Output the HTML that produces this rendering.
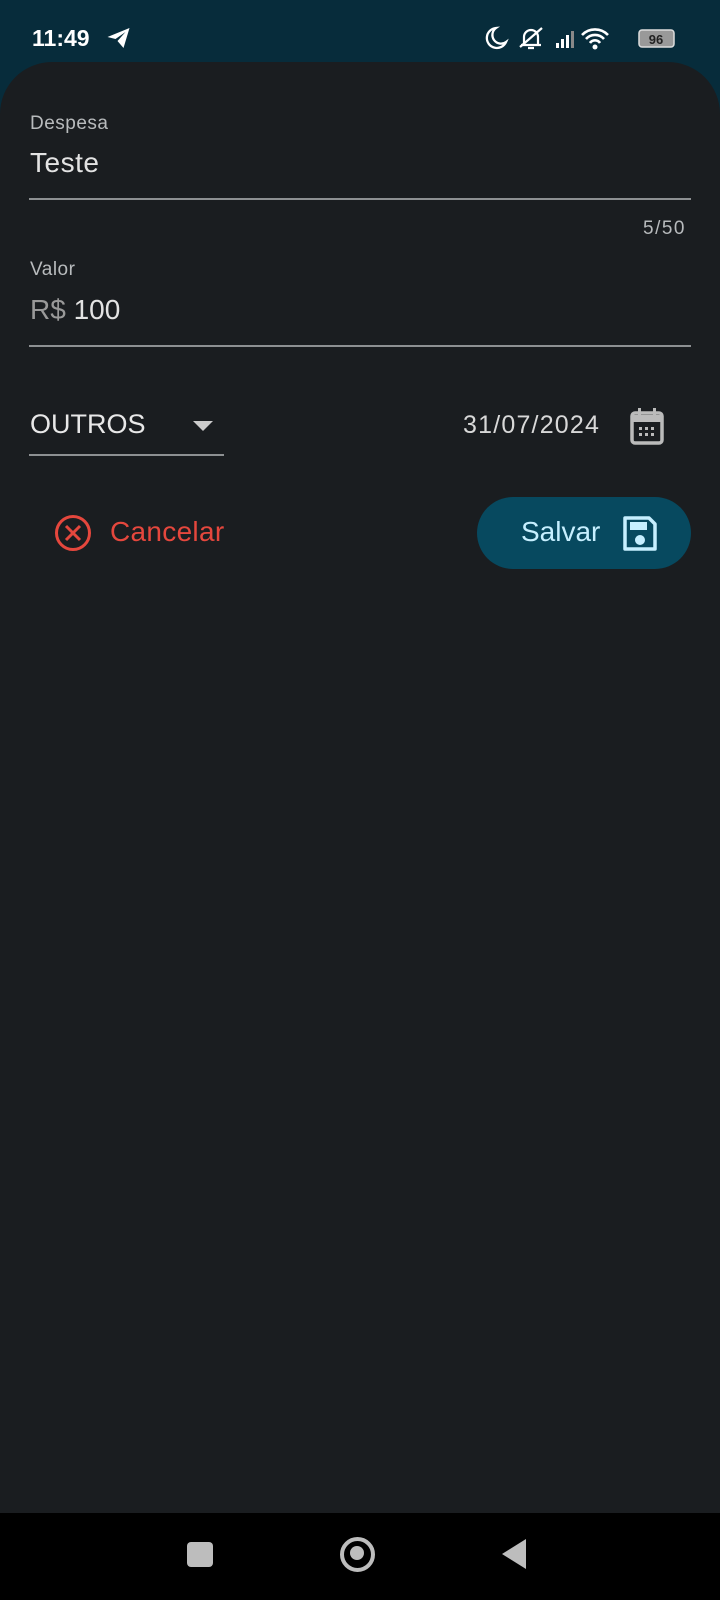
<!DOCTYPE html>
<html><head><meta charset="utf-8"><style>
body{margin:0;width:720px;height:1600px;background:#072c3b;font-family:"Liberation Sans",sans-serif;position:relative;overflow:hidden}
.card{position:absolute;left:0;top:62px;width:720px;height:1460px;background:#1a1d20;border-radius:52px 52px 0 0}
.t{position:absolute;white-space:nowrap}
.line{position:absolute;height:2px;background:#8d9092}
.nav{position:absolute;left:0;top:1513px;width:720px;height:87px;background:#000}
</style></head><body>
<div class="t" style="left:32px;top:25px;font-size:23px;font-weight:bold;color:#fff">11:49</div>
<svg class="t" style="left:106px;top:27px" width="25" height="22" viewBox="0 0 24 22"><path d="M1 10L23 1L17 21L11 14L19 5L9 12Z" fill="#fff"/></svg>
<svg class="t" style="left:482px;top:25px" width="196" height="28" viewBox="0 0 196 28">
<path d="M14 3a10 10 0 1 0 10 14a8 8 0 0 1-10-14z" fill="none" stroke="#fff" stroke-width="2.3"/>
<path d="M42 20V12a7 7 0 0 1 14 0v8h3H39z M46 23h6" fill="none" stroke="#fff" stroke-width="2.2"/><path d="M38 22L60 3" stroke="#fff" stroke-width="2.2"/>
<rect x="74" y="18" width="3" height="5" fill="#fff"/><rect x="79" y="14" width="3" height="9" fill="#fff"/><rect x="84" y="10" width="3" height="13" fill="#fff"/><rect x="89" y="6" width="3" height="17" fill="#888"/>
<path d="M100 10a18 18 0 0 1 26 0M104 14a12 12 0 0 1 18 0M108 18a6 6 0 0 1 10 0" fill="none" stroke="#fff" stroke-width="2.6"/><circle cx="113" cy="22" r="2.5" fill="#fff"/>
<rect x="157" y="5" width="35" height="17" rx="3" fill="#999" stroke="#ddd" stroke-width="1.5"/><text x="174" y="19" font-size="13" font-weight="bold" fill="#222" text-anchor="middle" font-family="Liberation Sans">96</text>
</svg>
<div class="card"></div>
<div class="t" style="left:30px;top:113px;font-size:19px;color:#b8bbbd;letter-spacing:0.5px">Despesa</div>
<div class="t" style="left:30px;top:147px;font-size:28px;color:#e3e3e3;letter-spacing:0.5px">Teste</div>
<div class="line" style="left:29px;top:198px;width:662px"></div>
<div class="t" style="left:643px;top:218px;font-size:19px;color:#b8bbbd;letter-spacing:1.5px">5/50</div>
<div class="t" style="left:30px;top:259px;font-size:19px;color:#b8bbbd;letter-spacing:0.5px">Valor</div>
<div class="t" style="left:30px;top:294px;font-size:28px;color:#e3e3e3"><span style="color:#999">R$</span> 100</div>
<div class="line" style="left:29px;top:345px;width:662px"></div>
<div class="t" style="left:30px;top:409px;font-size:27px;color:#e8e8e8">OUTROS</div>
<svg class="t" style="left:193px;top:421px" width="20" height="11"><path d="M0 0h20L10 10z" fill="#ccc"/></svg>
<div class="line" style="left:29px;top:454px;width:195px"></div>
<div class="t" style="left:463px;top:411px;font-size:25px;color:#d8d8d8;letter-spacing:1.2px">31/07/2024</div>
<svg class="t" style="left:629px;top:407px" width="36" height="38" viewBox="0 0 36 38"><rect x="3" y="6" width="30" height="30" rx="3" fill="none" stroke="#bbb" stroke-width="3.5"/><rect x="3" y="8" width="30" height="7" fill="#bbb"/><rect x="9" y="1" width="3" height="7" fill="#bbb"/><rect x="24" y="1" width="3" height="7" fill="#bbb"/><g fill="#bbb"><rect x="10" y="20" width="3" height="3"/><rect x="16" y="20" width="3" height="3"/><rect x="22" y="20" width="3" height="3"/><rect x="10" y="26" width="3" height="3"/><rect x="16" y="26" width="3" height="3"/><rect x="22" y="26" width="3" height="3"/></g></svg>
<svg class="t" style="left:54px;top:514px" width="38" height="38" viewBox="0 0 38 38"><circle cx="19" cy="19" r="16.5" fill="none" stroke="#e5473d" stroke-width="3"/><path d="M12 12l14 14M26 12L12 26" stroke="#e5473d" stroke-width="3"/></svg>
<div class="t" style="left:110px;top:516px;font-size:28px;color:#e5473d;letter-spacing:0.3px">Cancelar</div>
<div class="t" style="left:477px;top:497px;width:214px;height:72px;border-radius:36px;background:#07495f"></div>
<div class="t" style="left:521px;top:516px;font-size:28px;color:#c6efff">Salvar</div>
<svg class="t" style="left:622px;top:515px" width="36" height="37" viewBox="0 0 36 37"><path d="M3 3h24l6 6v25H3z" fill="none" stroke="#c6efff" stroke-width="3.5" stroke-linejoin="round"/><rect x="8" y="7" width="17" height="8" fill="#c6efff"/><circle cx="18" cy="25" r="5" fill="#c6efff"/></svg>
<div class="nav"></div>
<div class="t" style="left:187px;top:1542px;width:26px;height:25px;border-radius:4px;background:#bdbdbd"></div>
<div class="t" style="left:340px;top:1537px;width:27px;height:27px;border-radius:50%;border:4px solid #bdbdbd"></div>
<div class="t" style="top:1546px;width:14px;height:14px;border-radius:50%;background:#bdbdbd;left:350px"></div>
<svg class="t" style="left:502px;top:1539px" width="26" height="30"><path d="M24 0V30L0 15z" fill="#bdbdbd"/></svg>
</body></html>
